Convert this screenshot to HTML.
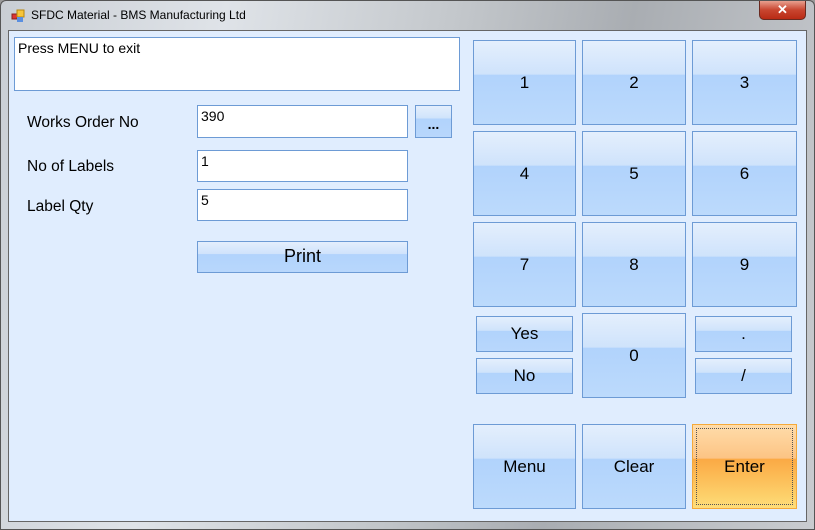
<!DOCTYPE html><html><head><style>
*{margin:0;padding:0;box-sizing:border-box}
body{width:815px;height:530px;overflow:hidden;background:#9a9a9a;font-family:"Liberation Sans",sans-serif;position:relative}
.frame{position:absolute;left:0;top:0;width:815px;height:530px;background:linear-gradient(100deg,#c9ced4 0%,#dfe3e8 25%,#c4c8cc 50%,#a9adb2 70%,#c9ccd0 100%);border:1px solid #555;border-radius:6px 6px 0 0}
.client{position:absolute;left:8px;top:30px;width:799px;height:492px;background:#e0edfe;border:1px solid #666}
.a{position:absolute}
.btn{position:absolute;border:1px solid #6d9bd5;background:linear-gradient(#e4effd 0%,#cfe3fb 40%,#b1d3fc 41%,#bcdafc 100%);display:flex;align-items:center;justify-content:center;font-size:17px;color:#000}
.sm{background:linear-gradient(#e4effd 0%,#cfe3fb 40%,#b1d3fc 41%,#b8d7fc 100%)}
.en{border-color:#f5a93a;background:linear-gradient(#ffdcaa 0%,#fcc484 40%,#fba944 41%,#fdd06a 85%,#fede7a 100%)}
.en::after{content:"";position:absolute;inset:3px;border:1px dotted #555}
.tb{position:absolute;background:#fff;border:1px solid #6d9bd5;font-size:14px;padding:2px 3px;line-height:16px}
.lbl{position:absolute;font-size:15.5px;color:#000}
</style></head><body>
<div class="frame"></div>
<svg class="a" style="left:11px;top:9px" width="14" height="14"><rect x="1" y="5" width="5" height="5" fill="#d33" stroke="#822" stroke-width="1"/><rect x="6" y="1" width="7" height="7" fill="#f7c53a" stroke="#b8860b"/><rect x="6" y="8" width="6" height="5" fill="#5a8fe0"/></svg>
<div class="a" style="left:31px;top:8px;font-size:12px;color:#000">SFDC Material - BMS Manufacturing Ltd</div>
<div class="a" style="left:759px;top:1px;width:47px;height:19px;border:1px solid #6a2a20;border-top:none;border-radius:0 0 5px 5px;background:linear-gradient(#e8a08f,#c8452f 50%,#b92a14);color:#fff;font-size:13px;font-weight:bold;text-align:center;line-height:18px">✕</div>
<div class="client"></div>
<div class="tb" style="left:14px;top:37px;width:446px;height:54px">Press MENU to exit</div>
<div class="lbl" style="left:27px;top:114px">Works Order No</div>
<div class="lbl" style="left:27px;top:158px">No of Labels</div>
<div class="lbl" style="left:27px;top:198px">Label Qty</div>
<div class="tb" style="left:197px;top:105px;width:211px;height:33px">390</div>
<div class="btn sm" style="left:415px;top:105px;width:37px;height:33px;font-size:14px;font-weight:bold;padding-top:4px">...</div>
<div class="tb" style="left:197px;top:150px;width:211px;height:32px">1</div>
<div class="tb" style="left:197px;top:189px;width:211px;height:32px">5</div>
<div class="btn sm" style="left:197px;top:241px;width:211px;height:32px;padding-bottom:2px;font-size:18px">Print</div>
<div class="btn" style="left:473px;top:40px;width:103px;height:85px">1</div>
<div class="btn" style="left:582px;top:40px;width:104px;height:85px">2</div>
<div class="btn" style="left:692px;top:40px;width:105px;height:85px">3</div>
<div class="btn" style="left:473px;top:131px;width:103px;height:85px">4</div>
<div class="btn" style="left:582px;top:131px;width:104px;height:85px">5</div>
<div class="btn" style="left:692px;top:131px;width:105px;height:85px">6</div>
<div class="btn" style="left:473px;top:222px;width:103px;height:85px">7</div>
<div class="btn" style="left:582px;top:222px;width:104px;height:85px">8</div>
<div class="btn" style="left:692px;top:222px;width:105px;height:85px">9</div>
<div class="btn sm" style="left:476px;top:316px;width:97px;height:36px">Yes</div>
<div class="btn sm" style="left:476px;top:358px;width:97px;height:36px">No</div>
<div class="btn" style="left:582px;top:313px;width:104px;height:85px">0</div>
<div class="btn sm" style="left:695px;top:316px;width:97px;height:36px">.</div>
<div class="btn sm" style="left:695px;top:358px;width:97px;height:36px">/</div>
<div class="btn" style="left:473px;top:424px;width:103px;height:85px">Menu</div>
<div class="btn" style="left:582px;top:424px;width:104px;height:85px">Clear</div>
<div class="btn en" style="left:692px;top:424px;width:105px;height:85px">Enter</div>
</body></html>
